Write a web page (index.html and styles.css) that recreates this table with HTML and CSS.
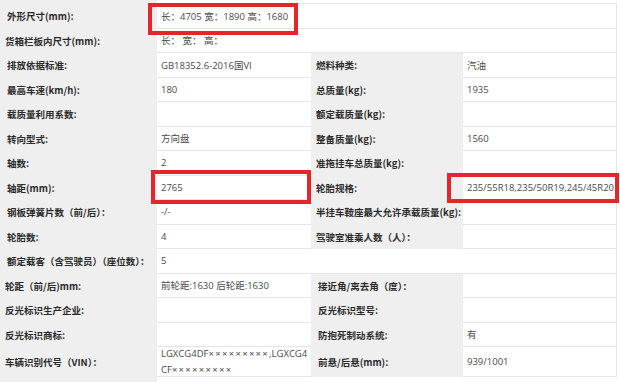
FILE: index.html
```html
<!DOCTYPE html>
<html lang="zh-CN">
<head>
<meta charset="utf-8">
<title>车辆参数</title>
<link rel="stylesheet" href="styles.css">
</head>
<body>
<div class="sheet">
  <div class="grid">
    <div class="l first">外形尺寸(mm):</div>
    <div class="v span first">长：4705 宽：1890 高：1680</div>

    <div class="l">货箱栏板内尺寸(mm):</div>
    <div class="v span">长：&nbsp;宽：&nbsp;高：</div>

    <div class="l">排放依据标准:</div>
    <div class="v">GB18352.6-2016国VI</div>
    <div class="l">燃料种类:</div>
    <div class="v end">汽油</div>

    <div class="l">最高车速(km/h):</div>
    <div class="v">180</div>
    <div class="l">总质量(kg):</div>
    <div class="v end">1935</div>

    <div class="l">载质量利用系数:</div>
    <div class="v"></div>
    <div class="l">额定载质量(kg):</div>
    <div class="v end"></div>

    <div class="l">转向型式:</div>
    <div class="v">方向盘</div>
    <div class="l">整备质量(kg):</div>
    <div class="v end">1560</div>

    <div class="l">轴数:</div>
    <div class="v">2</div>
    <div class="l">准拖挂车总质量(kg):</div>
    <div class="v end"></div>

    <div class="l">轴距(mm):</div>
    <div class="v">2765</div>
    <div class="l">轮胎规格:</div>
    <div class="v end">235/55R18,235/50R19,245/45R20</div>

    <div class="l">钢板弹簧片数（前/后）：</div>
    <div class="v">-/-</div>
    <div class="l">半挂车鞍座最大允许承载质量(kg):</div>
    <div class="v end"></div>

    <div class="l">轮胎数:</div>
    <div class="v">4</div>
    <div class="l">驾驶室准乘人数（人）：</div>
    <div class="v end"></div>

    <div class="l">额定载客（含驾驶员）（座位数）：</div>
    <div class="v span">5</div>

    <div class="l">轮距（前/后)mm:</div>
    <div class="v">前轮距:1630 后轮距:1630</div>
    <div class="l">接近角/离去角（度）：</div>
    <div class="v end"></div>

    <div class="l">反光标识生产企业:</div>
    <div class="v"></div>
    <div class="l">反光标识型号:</div>
    <div class="v end"></div>

    <div class="l">反光标识商标:</div>
    <div class="v"></div>
    <div class="l">防抱死制动系统:</div>
    <div class="v end">有</div>

    <div class="l tall">车辆识别代号（VIN）：</div>
    <div class="v tall vin"><p class="vin-text">LGXCG4DF<span class="x">×××××××××</span>,LGXCG4CF<span class="x">×××××××××</span></p></div>
    <div class="l tall">前悬/后悬(mm):</div>
    <div class="v tall end">939/1001</div>
  </div>
  <div class="mark mark-size"></div>
  <div class="mark mark-base"></div>
  <div class="mark mark-tire"></div>
</div>
</body>
</html>
```

FILE: styles.css
```css
* { box-sizing: border-box; }
html, body {
  margin: 0;
  padding: 0;
  background: #ffffff;
}
body {
  font-family: "Noto Sans CJK SC", "Noto Sans", sans-serif;
  font-size: 10px;
  width: 620px;
  height: 382px;
  overflow: hidden;
}
.sheet {
  position: relative;
  width: 620px;
  height: 382px;
}
.grid {
  display: grid;
  grid-template-columns: 157px 154px 152px 154px;
  grid-auto-rows: 24.5px;
  grid-template-rows: 28.5px;
  background: linear-gradient(to right, #efefef 0, #efefef 157px, transparent 157px);
  height: 382px;
}
.l {
  background: #efefef;
  color: #2b2b2b;
  font-weight: 700;
  font-size: 9.5px;
  display: flex;
  align-items: center;
  padding-left: 7px;
  white-space: nowrap;
}
.v {
  background: #ffffff;
  color: #4a4a4a;
  font-family: "Open Sans", "Noto Sans CJK SC", sans-serif;
  font-size: 9.5px;
  display: flex;
  align-items: center;
  padding-left: 4px;
  border-bottom: 1px solid #e6e6e6;
  white-space: nowrap;
}
.l:nth-child(4n+3) { padding-left: 5px; }
.span { grid-column: 2 / 5; border-right: 1px solid #e6e6e6; }
.end { border-right: 1px solid #e6e6e6; }
.first { padding-top: 4px; }
.v.first { border-top: 1px solid #e6e6e6; margin-top: 3px; padding-top: 0; }
.tall { height: 30px; }
.vin {
  white-space: normal;
  padding-right: 0;
}
.vin-text {
  margin: 0;
  word-break: break-all;
  line-height: 16px;
}
.x { letter-spacing: 1.3px; }
.mark {
  position: absolute;
  border: 4px solid #e3262b;
}
.mark-size { left: 148px; top: 3px; width: 150px; height: 32px; }
.mark-base { left: 151px; top: 170px; width: 160px; height: 34px; }
.mark-tire { left: 447px; top: 173px; width: 172px; height: 30px; }
```
